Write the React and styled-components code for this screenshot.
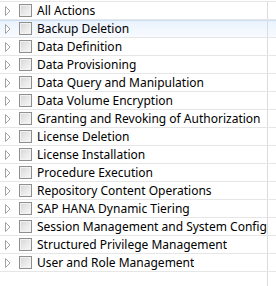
import React from "react";
import styled, { createGlobalStyle } from "styled-components";

const Global = createGlobalStyle`
  html, body { margin: 0; padding: 0; background: #fff; }
  body { font-family: "Noto Sans", "Open Sans", sans-serif; }
`;

const Table = styled.div`
  display: flex;
  flex-direction: column;
  height: 286px;
  width: 276px;
  overflow: hidden;
  padding-top: 1px;
  box-sizing: border-box;
`;

const Row = styled.div`
  display: grid;
  grid-template-columns: 268px 1fr;
  height: 17px;
  border-top: 1px solid #e6e6e6;
  ${(p) =>
    p.$selected &&
    `
    background: linear-gradient(to bottom, #e8f2fd 0%, #f1f7fe 50%, #f8fbff 100%);
    box-shadow: inset 0 1px 0 #c9e0f7;
  `}
  &:last-of-type {
    border-bottom: 1px solid #e6e6e6;
  }
`;

const Cell = styled.div`
  display: flex;
  align-items: center;
  border-right: 1px solid #dcdcdc;
  overflow: hidden;
  white-space: nowrap;
  min-width: 0;
`;

const Expander = styled.span`
  display: inline-flex;
  width: 6px;
  height: 10px;
  margin-left: 5px;
  flex: none;
`;

const Check = styled.span`
  flex: none;
  box-sizing: border-box;
  width: 13px;
  height: 13px;
  margin-left: 8px;
  border: 1px solid #8f8f8f;
  background: linear-gradient(135deg, #d4d4d4 0%, #e8e8e8 50%, #f8f8f8 100%);
  box-shadow: inset 0 0 0 1px #f2f2f2;
`;

const Label = styled.span`
  margin-left: 5px;
  font-size: 12px;
  line-height: 17px;
  color: #000;
  overflow: hidden;
  white-space: nowrap;
`;

const Filler = styled.div`
  flex: 1;
  display: grid;
  grid-template-columns: 268px 1fr;
`;

const FillerCell = styled.div`
  border-right: 1px solid #dcdcdc;
`;

const items = [
  "All Actions",
  "Backup Deletion",
  "Data Definition",
  "Data Provisioning",
  "Data Query and Manipulation",
  "Data Volume Encryption",
  "Granting and Revoking of Authorization",
  "License Deletion",
  "License Installation",
  "Procedure Execution",
  "Repository Content Operations",
  "SAP HANA Dynamic Tiering",
  "Session Management and System Configuration",
  "Structured Privilege Management",
  "User and Role Management",
];

const Triangle = () => (
  <Expander>
    <svg width="6" height="10" viewBox="0 0 6 10">
      <path d="M0.5 0.5 L5 5 L0.5 9.5 Z" fill="#fff" stroke="#a3a3a3" strokeWidth="1" />
    </svg>
  </Expander>
);

const Rows = styled.div`
  display: flex;
  flex-direction: column;
`;

export default function App() {
  return (
    <>
      <Global />
      <Table>
        <Rows>
          {items.map((t, i) => (
            <Row key={t} $selected={i === 1}>
              <Cell>
                <Triangle />
                <Check />
                <Label>{t}</Label>
              </Cell>
              <div />
            </Row>
          ))}
        </Rows>
        <Filler>
          <FillerCell />
          <div />
        </Filler>
      </Table>
    </>
  );
}
